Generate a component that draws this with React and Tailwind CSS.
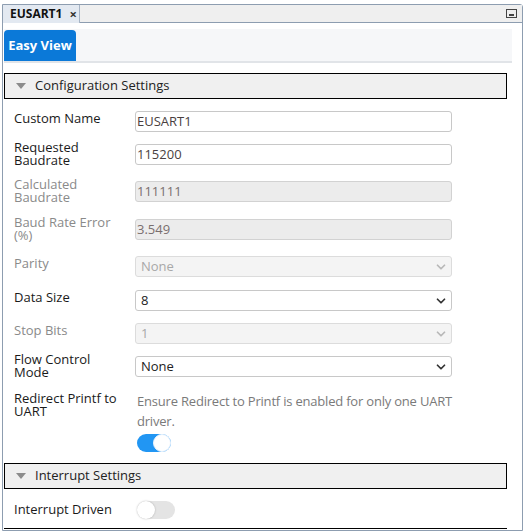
import { ChevronDown } from 'lucide-react';

const font = { fontFamily: '"Open Sans", "Noto Sans", sans-serif' };

function SectionHeader({ title }) {
  return (
    <div className="h-[26px] mr-[5px] border border-black bg-[#f0f0f0] flex items-center">
      <span className="ml-[11px] w-0 h-0 border-l-[5px] border-r-[5px] border-t-[6px] border-l-transparent border-r-transparent border-t-[#8c8c8c]"></span>
      <span className="ml-[9px] text-[13px] text-[#222]">{title}</span>
    </div>
  );
}

function Field({ label, lines = 1, disabled, height, children }) {
  return (
    <div className="flex items-start" style={{ height }}>
      <div
        className={`w-[131px] shrink-0 pl-[10px] text-[13px] leading-[13px] ${lines === 2 ? '-mt-[3px]' : 'mt-[1px]'} ${disabled ? 'text-[#8a8a8a]' : 'text-[#1a1a1a]'}`}
      >
        {label}
      </div>
      {children}
    </div>
  );
}

function TextBox({ value, disabled }) {
  return (
    <div
      className={`w-[317px] h-[21px] rounded-[3px] border flex items-center pl-[1px] text-[13px] ${disabled ? 'bg-[#ececec] border-[#d2d2d2] text-[#7a6f6f]' : 'bg-white border-[#c8c8c8] text-[#4a3f3f]'}`}
    >
      {value}
    </div>
  );
}

function Select({ value, disabled }) {
  return (
    <div
      className={`w-[317px] h-[21px] rounded-[3px] border flex items-center justify-between pl-[5px] pr-[3px] text-[13px] ${disabled ? 'bg-[#f4f4f4] border-[#dcdcdc] text-[#a8a8a8]' : 'bg-white border-[#c8c8c8] text-[#222]'}`}
    >
      <span>{value}</span>
      <ChevronDown size={14} strokeWidth={3} className={disabled ? 'text-[#b8b8b8]' : 'text-[#333]'} />
    </div>
  );
}

export default function App() {
  return (
    <div className="w-[526px] h-[531px] bg-white overflow-hidden select-none" style={font}>
      <div className="ml-[2px] mr-[3px] mt-[4px] h-[527px] border border-[#8d9db0] rounded-tr-[3px] flex flex-col">
        {/* Tab strip */}
        <div className="h-[18px] shrink-0 bg-[#efefef] border-b border-[#8d9db0] flex items-stretch justify-between">
          <div className="w-[77px] -mb-px bg-[#e3e9f1] border-r border-[#a6b4c6] flex items-center pl-[7px] gap-[7px]">
            <span className="text-[12px] font-bold text-[#111]">EUSART1</span>
            <span className="text-[13px] font-bold text-[#333] leading-none">×</span>
          </div>
          <div className="flex items-center pr-[5px]">
            <div className="w-[11px] h-[9px] border border-[#444] flex items-end justify-center pb-[1px]">
              <div className="w-[5px] h-[2px] bg-[#444]"></div>
            </div>
          </div>
        </div>

        {/* Content */}
        <div className="flex-1 bg-white pl-[1px] pr-[10px]">
          <div className="mt-[6px] h-[34px] bg-[#f6f7f9] border-b-2 border-[#e1e4e8] flex items-end">
            <div className="w-[72px] h-[31px] rounded-t-[4px] bg-[#0b79d8] flex items-center justify-center">
              <span className="text-[13px] font-bold text-white">Easy View</span>
            </div>
          </div>

          <div className="mt-[10px]">
            <SectionHeader title="Configuration Settings" />
          </div>

          <div className="mt-[12px]">
            <Field label="Custom Name" height={33}>
              <TextBox value="EUSART1" />
            </Field>
            <Field label={<>Requested<br />Baudrate</>} lines={2} height={37}>
              <TextBox value="115200" />
            </Field>
            <Field label={<>Calculated<br />Baudrate</>} lines={2} disabled height={38}>
              <TextBox value="111111" disabled />
            </Field>
            <Field label={<>Baud Rate Error<br />(%)</>} lines={2} disabled height={37}>
              <TextBox value="3.549" disabled />
            </Field>
            <Field label="Parity" disabled height={34}>
              <Select value="None" disabled />
            </Field>
            <Field label="Data Size" height={33}>
              <Select value="8" />
            </Field>
            <Field label="Stop Bits" disabled height={33}>
              <Select value="1" disabled />
            </Field>
            <Field label={<>Flow Control<br />Mode</>} lines={2} height={36}>
              <Select value="None" />
            </Field>

            <div className="flex items-start h-[71px]">
              <div className="w-[131px] shrink-0 pl-[10px] text-[13px] leading-[13px] text-[#1a1a1a]">
                Redirect Printf to<br />UART
              </div>
              <div className="w-[340px] pl-[2px]">
                <p className="text-[13px] leading-[20px] text-[#7a7a7a] -mt-[1px] tracking-[-0.2px]">
                  Ensure Redirect to Printf is enabled for only one UART<br />driver.
                </p>
                <div className="mt-[3px] w-[34px] h-[18px] rounded-full bg-[#2196f3] flex items-center justify-end">
                  <div className="w-[18px] h-[18px] rounded-full bg-white border border-[#e8f2fd]"></div>
                </div>
              </div>
            </div>
          </div>

          <SectionHeader title="Interrupt Settings" />

          <div className="mt-[12px] flex items-center h-[18px]">
            <div className="w-[131px] shrink-0 pl-[10px] text-[13px] leading-[13px] -mt-[2px] text-[#1a1a1a]">Interrupt Driven</div>
            <div className="ml-[2px] w-[38px] h-[18px] rounded-full bg-[#e4e4e4] flex items-center">
              <div className="w-[18px] h-[18px] rounded-full bg-white shadow-[0_0_2px_rgba(0,0,0,0.25)]"></div>
            </div>
          </div>

          <div className="mt-[9px] mr-[5px] border-t border-black"></div>
        </div>
      </div>
    </div>
  );
}
